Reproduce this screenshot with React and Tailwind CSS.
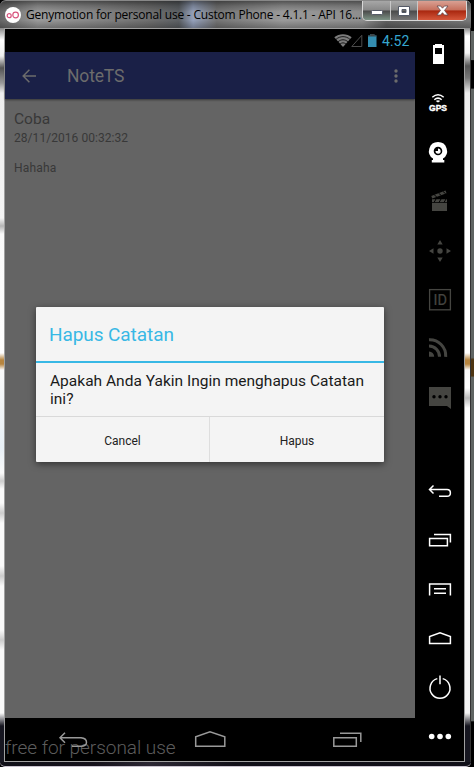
import React from 'react';

const thin = { fill: 'none', stroke: 'currentColor', strokeWidth: 1.5 };

function Tool({ children, dim }) {
  return (
    <svg
      viewBox="0 0 49 49"
      className={dim ? 'block h-[49px] w-[49px] shrink-0 text-[#454541]' : 'block h-[49px] w-[49px] shrink-0 text-white'}
      fill="currentColor"
    >
      {children}
    </svg>
  );
}

function TitleBar() {
  return (
    <header className="relative flex h-7 shrink-0 items-start rounded-t-md border-t border-[#888] bg-[linear-gradient(90deg,#666_0%,#999_8%,#858585_20%,#6d6d6d_32%,#5c6064_38%,#94a0ba_41%,#747474_46%,#999_60%,#8d8d8d_77%,#606060_82%,#777_100%)]">
      <div className="absolute inset-0 rounded-t-md bg-[linear-gradient(180deg,rgba(0,0,0,0.45)_0%,rgba(0,0,0,0.2)_18%,rgba(0,0,0,0)_40%,rgba(0,0,0,0)_72%,rgba(0,0,0,0.25)_100%)]" />
      <div className="relative mt-[6px] ml-[5px] flex h-4 w-4 shrink-0 items-center justify-center rounded-full bg-white">
        <svg viewBox="0 0 16 16" className="h-4 w-4" fill="none" stroke="#d8567f" strokeWidth="1.2">
          <circle cx="4.2" cy="8.7" r="2" />
          <circle cx="10.6" cy="8" r="2.8" />
        </svg>
      </div>
      <h1 className="relative mt-[5px] ml-[5px] w-[340px] shrink-0 overflow-hidden font-['Open_Sans',sans-serif] text-[12px] leading-[18px] tracking-[-0.2px] whitespace-nowrap text-black">
        Genymotion for personal use - Custom Phone - 4.1.1 - API 16...
      </h1>
      <div className="relative -ml-[4px] flex h-[20px] w-[105px] shrink-0 overflow-hidden rounded-b-[5px] border border-t-0 border-[#d8d8d8]">
        <div className="flex w-[28px] items-center justify-center border-r border-[#c8c8c8] bg-[linear-gradient(180deg,#a7a7a7_0%,#888_48%,#4a4a4a_52%,#7d9385_100%)]">
          <svg viewBox="0 0 12 6" className="mt-[4px] h-[6px] w-3"><rect x=".5" y=".5" width="11" height="4" rx="1" fill="#fff" stroke="#555b68" /></svg>
        </div>
        <div className="flex w-[27px] items-center justify-center border-r border-[#c8c8c8] bg-[linear-gradient(180deg,#a7a7a7_0%,#858585_48%,#4a4a4a_52%,#777_100%)]">
          <svg viewBox="0 0 12 10" className="h-[10px] w-3"><path fillRule="evenodd" d="M.5.5h11v9H.5zM4 3.5v3h4v-3z" fill="#fff" stroke="#555b68" /></svg>
        </div>
        <div className="flex flex-1 items-center justify-center bg-[linear-gradient(180deg,#d9a093_0%,#c6705d_47%,#a9270f_52%,#d5573b_100%)]">
          <svg viewBox="0 0 13 11" className="h-[11px] w-[13px]"><path d="M1 1h3.6l1.9 2.2L8.4 1H12L8.5 5.4 12.1 10H8.4L6.5 7.7 4.6 10H.9l3.6-4.6z" fill="#fff" stroke="#61484d" strokeWidth=".8" /></svg>
        </div>
      </div>
    </header>
  );
}

function StatusBar() {
  return (
    <div className="flex h-[23px] shrink-0 items-center bg-black pl-[329px]">
      <svg viewBox="0 0 44 15" className="h-[15px] w-[44px] shrink-0">
        <path d="M9 14 .3 4.3C5 .2 13 .2 17.7 4.3z" fill="#7c7c7c" />
        <g fill="none" stroke="#000" strokeWidth=".8">
          <path d="M2 6.4c4-3.7 10-3.7 14 0M4 8.8c3-2.7 7-2.7 10 0M6 11.1c2-1.7 4-1.7 6 0" />
        </g>
        <path d="M17.8 13.5h10V2.3z" fill="none" stroke="#4c4c4c" strokeWidth="1" />
        <path d="M34 2.5h2.3V1h4v1.5h2.2V14H34z" fill="#348eb1" />
        <path d="M34 2.5h2.3V1h4v1.5h2.2v1H34z" fill="#3d4548" />
      </svg>
      <span className="ml-[4px] font-['Roboto',sans-serif] text-[14px] leading-[20px] tracking-[0.15px] text-[#35a6d0]">4:52</span>
    </div>
  );
}

function AppBar() {
  return (
    <div className="z-10 flex h-[47px] shrink-0 items-center bg-[#1a2047] text-[#6c6c6c] shadow-[0_1px_2px_rgba(0,0,0,0.45)]">
      <svg viewBox="0 0 14 14" className="ml-[17px] h-[14px] w-[14px]" fill="none" stroke="currentColor" strokeWidth="1.5">
        <path d="M14 7H1.2M7.4.8 1.2 7l6.2 6.2" />
      </svg>
      <span className="ml-[31px] w-[200px] font-['Roboto',sans-serif] text-[17.5px] leading-6 tracking-[-0.15px]">NoteTS</span>
      <svg viewBox="0 0 4 14" className="ml-[127px] h-[14px] w-1" fill="currentColor">
        <circle cx="2" cy="2" r="1.7" /><circle cx="2" cy="7" r="1.7" /><circle cx="2" cy="12" r="1.7" />
      </svg>
    </div>
  );
}

function Dialog() {
  return (
    <div className="absolute top-[208px] left-[31px] flex h-[155px] w-[348px] flex-col rounded-[1px] bg-[#f4f4f4] font-['Roboto',sans-serif] shadow-[0_2px_7px_rgba(0,0,0,0.5)]">
      <h2 className="flex h-[56px] shrink-0 items-center border-b-2 border-[#38b8e5] pt-[3px] pl-[13px] text-[19px] tracking-[-0.08px] text-[#38b8e5]">Hapus Catatan</h2>
      <p className="h-[53px] shrink-0 pt-[9px] pl-[14px] text-[15.5px] leading-[18px] tracking-[0.01px] text-[#1a1a1a]">
        Apakah Anda Yakin Ingin menghapus Catatan<br />ini?
      </p>
      <div className="flex flex-1 border-t border-[#d9d9d9] text-[12px] text-[#222]">
        <button className="flex w-[174px] items-center justify-center border-r border-[#dedede] pt-[2px]">Cancel</button>
        <button className="flex flex-1 items-center justify-center pt-[2px]">Hapus</button>
      </div>
    </div>
  );
}

function NavBar() {
  return (
    <div className="relative h-[43px] shrink-0 bg-black">
      <span className="absolute top-[18px] left-0 font-['Roboto',sans-serif] text-[19px] leading-[24px] font-light tracking-[-0.03px] whitespace-nowrap text-[#5c5c5c]">free for personal use</span>
      <svg viewBox="0 0 410 43" className="relative block h-[43px] w-[410px]" fill="none" stroke="#999" strokeWidth="1.5">
        <path d="M60 14.5 55 19.5 60 24.5M55 19.5H76Q81.5 20 81.5 24T76 28H67" transform="translate(0 .2)" />
        <path d="M190.7 28.3V18.8L205 13.7l14.8 5.1v9.5z" />
        <path d="M328.8 19.8h22.5v8.5h-22.5zM335 15.3h20.8V24" />
      </svg>
    </div>
  );
}

function Sidebar() {
  return (
    <aside className="flex w-[49px] shrink-0 flex-col bg-black">
      <Tool><path fillRule="evenodd" d="M18 16h2v-1h7v1h2v19H18zM20 19v6h7v-6z" /></Tool>
      <Tool>
        <g fill="none" stroke="currentColor" strokeWidth="1.5"><path d="M17.3 19.2q5.7-5 11.4 0M19.3 21.8q3.7-3.3 7.4 0" /></g>
        <path d="m20.7 22.9 2.3 1.5 2.3-1.5q-2.3-1.2-4.6 0z" />
        <text x="14" y="33" textLength="18" lengthAdjust="spacingAndGlyphs" className="font-['Liberation_Sans',sans-serif] text-[8.5px] font-bold" stroke="currentColor" strokeWidth=".4">GPS</text>
      </Tool>
      <Tool>
        <path fillRule="evenodd" d="M23 15a9 9 0 0 1 5 16.5V33h1.3v2.5H16.8V33H18v-1.5A9 9 0 0 1 23 15zM23 19.7a4.3 4.3 0 1 0 0 8.6 4.3 4.3 0 0 0 0-8.6z" />
        <path d="M23 21.5v2.6h-2.5a2.6 2.6 0 1 0 2.5-2.6z" />
      </Tool>
      <Tool dim>
        <path d="M17 27h15v8H17zM17 23.3h15v2.9H17z" />
        <path d="m16.3 20 14.2-5.5 1 2.7-14.2 5.4z" />
        <path d="m19.2 18.8 2.6 2.2M23.6 17.2l2.6 2.2M28 15.5l2.6 2.2M21 23l-2 3.5M26 23l-2 3.5M31 23l-2 3.5" stroke="#000" strokeWidth="1" />
      </Tool>
      <Tool dim>
        <circle cx="25" cy="26" r="2.7" />
        <path d="m25 15 2.7 4.5h-5.4zM25 37l2.7-4.5h-5.4zM14 26l4.5-2.7v5.4zM36 26l-4.5-2.7v5.4z" />
      </Tool>
      <Tool dim>
        <rect x="14.6" y="15.6" width="20.8" height="20.2" fill="none" stroke="currentColor" strokeWidth="1.3" />
        <text x="18.5" y="31" textLength="13.5" lengthAdjust="spacingAndGlyphs" className="font-['Roboto',sans-serif] text-[14px]" stroke="currentColor" strokeWidth=".2">ID</text>
      </Tool>
      <Tool dim>
        <g fill="none" stroke="currentColor" strokeWidth="3"><path d="M14 16.8A16 16 0 0 1 30.7 33.8M14 23A10.5 10.5 0 0 1 24.5 33.8" /></g>
        <path d="M14 28.5a5.2 5.2 0 0 1 5.2 5.2H14z" />
      </Tool>
      <Tool dim>
        <path d="M14 15h22v22l-4-3H14z" />
        <g fill="#000"><circle cx="19" cy="24.7" r="1.7" /><circle cx="25" cy="24.7" r="1.7" /><circle cx="31" cy="24.7" r="1.7" /></g>
      </Tool>
      <div className="flex-1" />
      <Tool><path {...thin} d="m18.5 18.5-4 4 4 4M14.5 22.6H32q3.4 0 3.4 3.3T32 29.3h-8" /></Tool>
      <Tool><path {...thin} d="M14.6 22.6h17.8v7.2H14.6zM19 18.6h16.4v8" /></Tool>
      <Tool><path {...thin} d="M14.6 30.5V19h20.8v11.5M19 23.8h12M19 28.3h12" /></Tool>
      <Tool><path {...thin} d="M14.6 29.6v-7L25 18.7l10.4 3.9v7z" /></Tool>
      <Tool><path {...thin} d="M22.3 15.6a10 10 0 1 0 5.4 0M25 12.5v8.8" /></Tool>
      <Tool><circle cx="16.7" cy="24.5" r="2.8" /><circle cx="25" cy="24.5" r="2.8" /><circle cx="33.3" cy="24.5" r="2.8" /></Tool>
    </aside>
  );
}

export default function App() {
  return (
    <div className="flex h-[767px] w-[474px] overflow-hidden bg-[linear-gradient(180deg,#000_0%,#000_4%,#5f6462_4.1%,#5f6462_7.8%,#000_7.9%,#000_11.5%,#606563_11.6%,#606563_46.6%,#4e3511_46.9%,#4e3511_49%,#606563_49.2%,#606563_94%,#000_94.1%)]">
      <div className="flex w-[471px] shrink-0 flex-col rounded-t-md rounded-b-md bg-[#0b0b12]">
        <TitleBar />
        <div className="flex h-[734px] shrink-0">
          <div className="w-1 shrink-0 bg-[linear-gradient(180deg,#888_0px,#fff_12px,#eee_28px,#555_40px,#999_55px,#eee_65px,#f5f5f5_190px,#b5b5b5_198px,#fafafa_206px,#fff_325px,#b7853f_332px,#b7853f_336px,#fafafa_342px,#e8f0f6_420px,#fafafa_445px,#ccc_453px,#fafafa_461px,#fafafa_475px,#ccc_485px,#fafafa_495px,#fafafa_538px,#ccc_548px,#fafafa_558px,#fafafa_602px,#ccc_612px,#fafafa_622px,#fafafa_685px,#161620_698px)]" />
          <div className="flex w-[461px] shrink-0 border border-[#a0a0a0] bg-black">
            <main className="flex w-[410px] shrink-0 flex-col">
              <StatusBar />
              <AppBar />
              <section className="relative h-[619px] shrink-0 bg-[#646464] pl-[9px] font-['Roboto',sans-serif] text-[#383838]">
                <h3 className="pt-[9px] text-[15.5px] leading-[22px]">Coba</h3>
                <p className="text-[12px] leading-[16px] tracking-[0.05px]">28/11/2016 00:32:32</p>
                <p className="mt-[14px] text-[12px] leading-[16px] tracking-[0.2px]">Hahaha</p>
                <Dialog />
              </section>
              <NavBar />
            </main>
            <Sidebar />
          </div>
          <div className="w-[5px] shrink-0 bg-[linear-gradient(180deg,#888_0px,#fff_8px,#f4f4f4_25px,#555_38px,#777_50px,#eee_65px,#fff_190px,#fff_325px,#b7853f_332px,#b7853f_336px,#fafafa_342px,#fff_360px,#bbb_370px,#fff_380px,#f4f4f4_685px,#161620_698px)]" />
          <div className="w-px shrink-0 bg-[#333]" />
        </div>
        <div className="h-[5px] shrink-0 rounded-b-md border-b border-[#c9c3cf] bg-[linear-gradient(90deg,#101018,#15121b_20%,#2b2733_32%,#111018_50%,#100f18)]" />
      </div>
    </div>
  );
}
